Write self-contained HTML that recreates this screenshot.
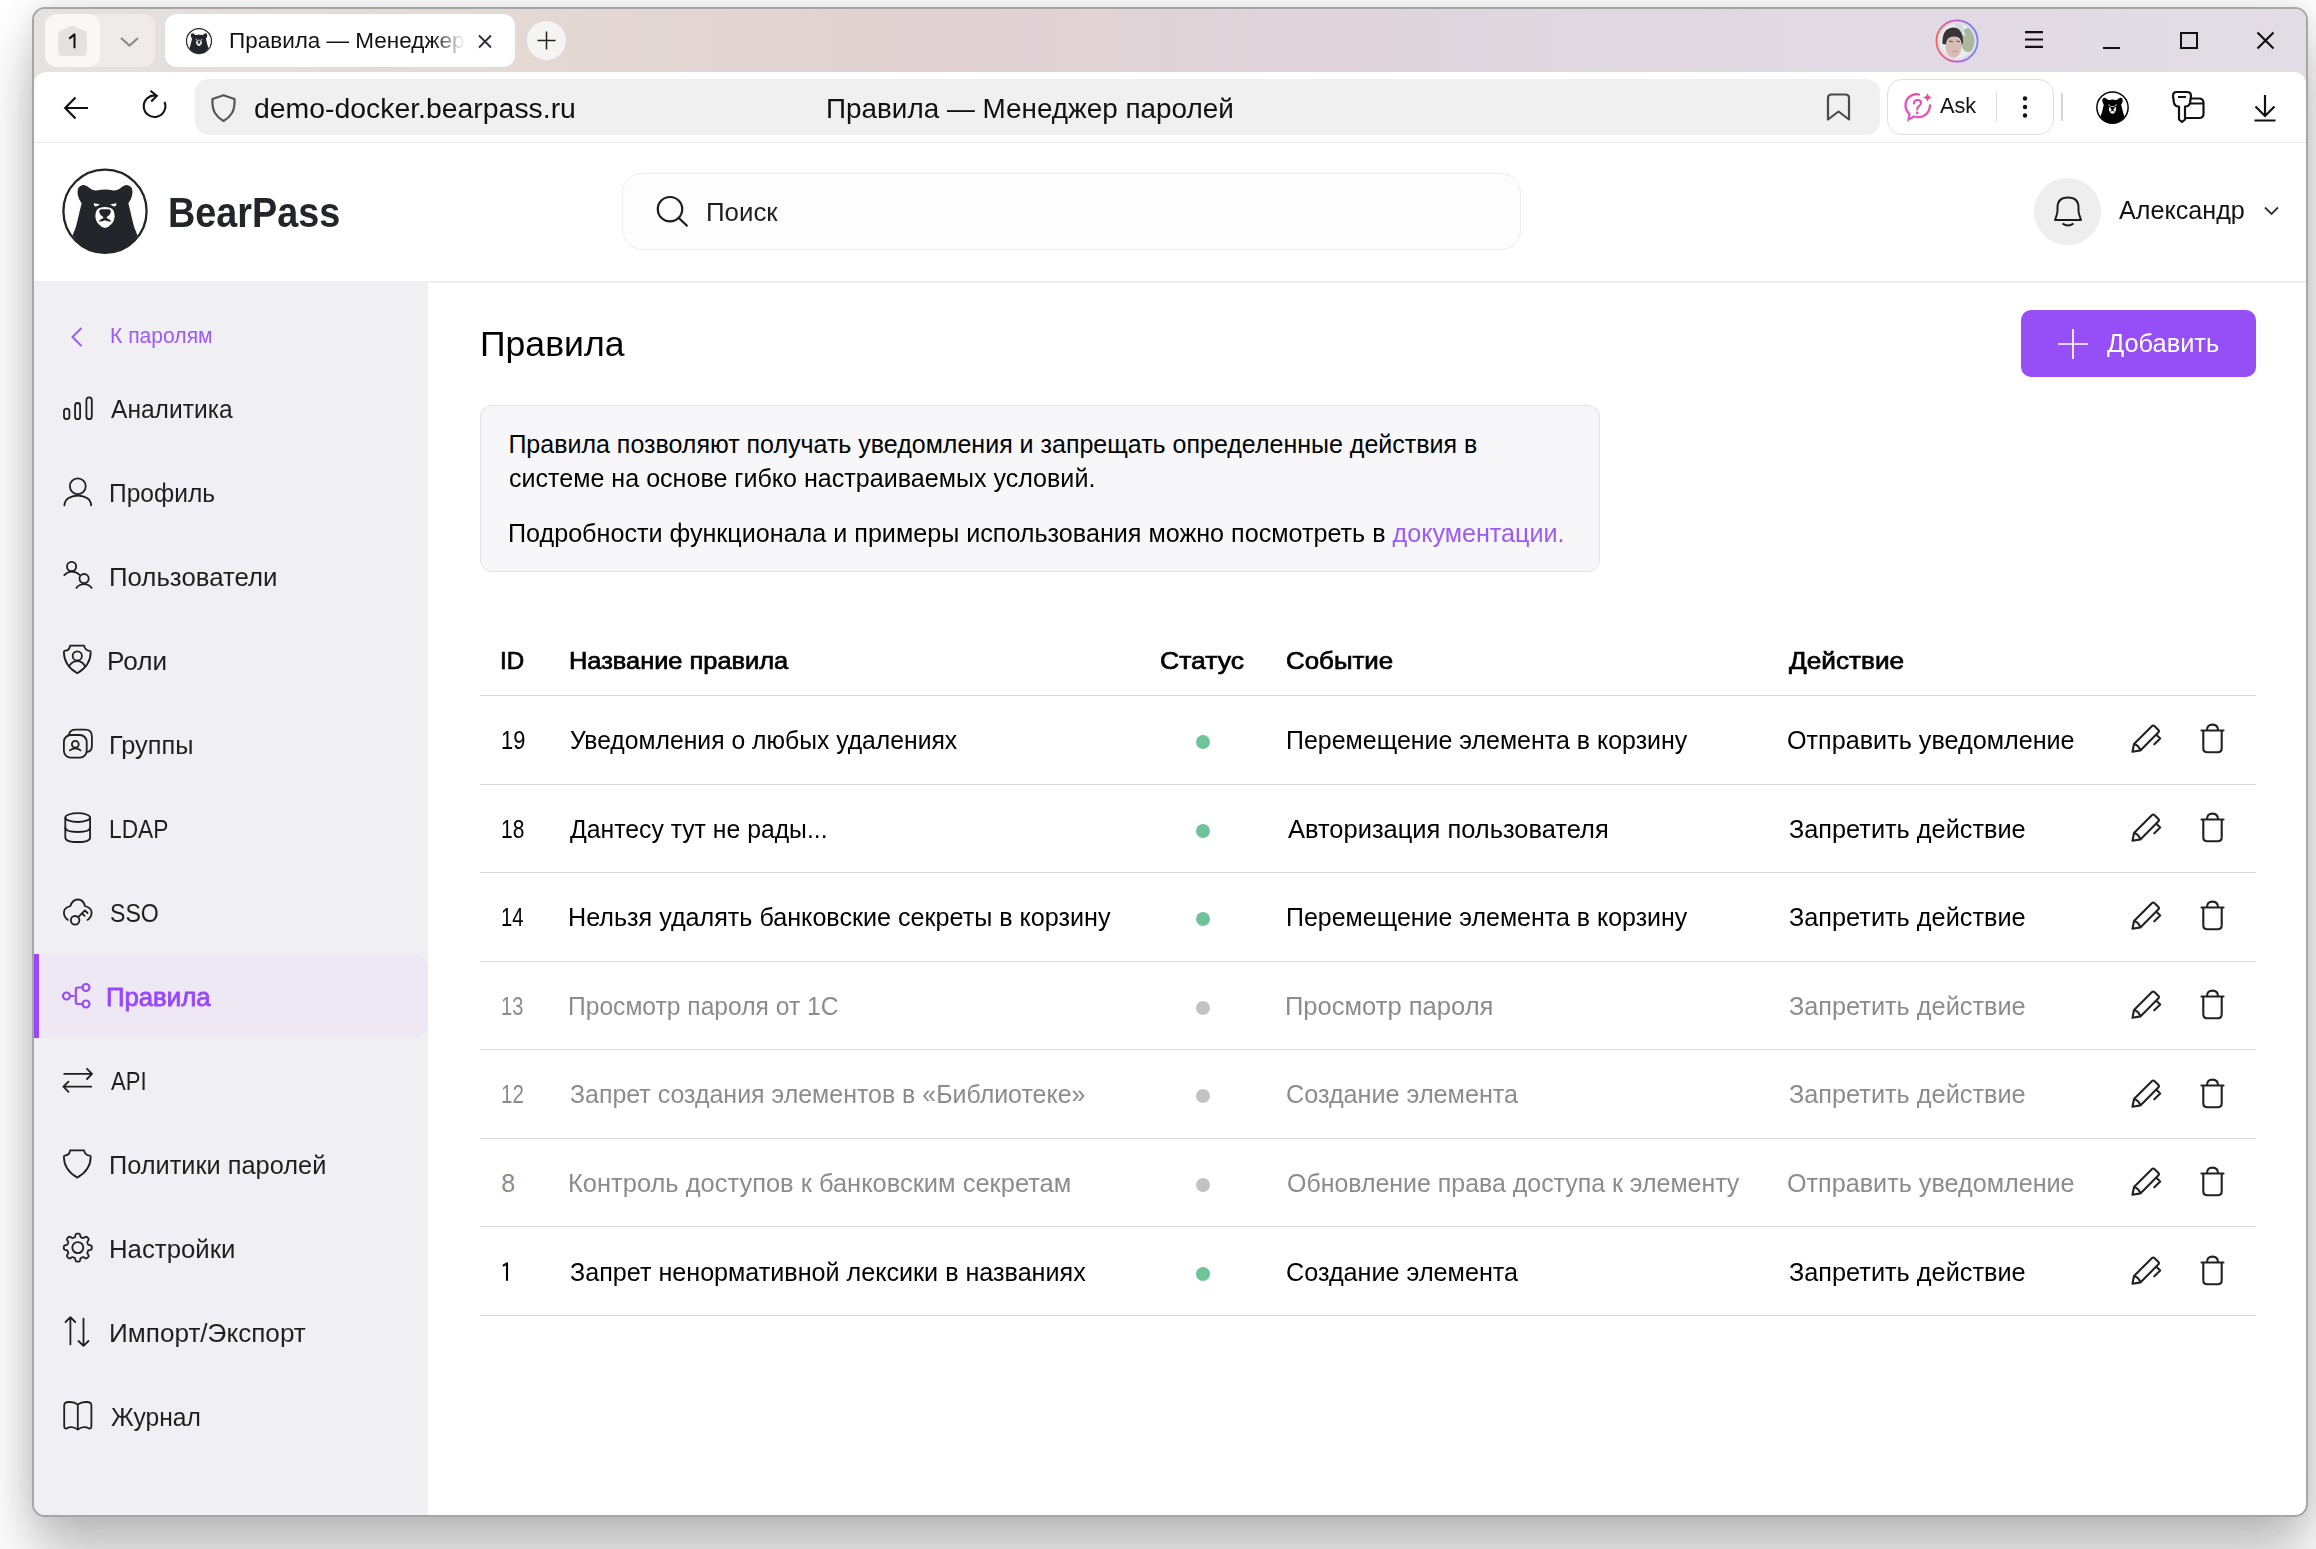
<!DOCTYPE html><html><head><meta charset="utf-8"><style>
*{margin:0;padding:0;box-sizing:border-box}
html,body{width:2316px;height:1549px;overflow:hidden;background:#ffffff;font-family:"Liberation Sans",sans-serif}
.t{position:absolute;white-space:nowrap;line-height:1}
.a{position:absolute}
svg{position:absolute;overflow:visible}
#win{position:absolute;left:32px;top:7px;width:2276px;height:1510px;border:2px solid #a6a6a6;border-radius:13px;overflow:hidden;
 box-shadow:0 44px 58px rgba(0,0,0,0.23), 0 0 40px rgba(0,0,0,0.10), 0 0 20px rgba(0,0,0,0.04);background:#fff}
#clip{position:absolute;left:34px;top:9px;width:2272px;height:1506px;overflow:hidden;border-radius:11px}
#L{position:absolute;left:-34px;top:-9px;width:2316px;height:1549px}
</style></head><body>
<div id="win"></div>
<div id="clip"><div id="L">
<div class="a" style="left:34px;top:9px;width:2272px;height:90px;border-radius:11px 11px 0 0;background:linear-gradient(90deg,#e5e2df 0%,#e3d7d3 25%,#e2d2d3 40%,#dfd5dd 60%,#e1dae4 82%,#e2dce4 100%)"></div>
<div class="a" style="left:45px;top:14px;width:110px;height:53px;border-radius:12px;background:#eeebe8"></div>
<div class="a" style="left:45px;top:14px;width:55px;height:53px;border-radius:12px;background:#f9f8f7"></div>
<svg style="left:58px;top:25px" width="29" height="31" viewBox="0 0 29 31"><path d="M14.5 0.5 L26 5.5 Q29 7 29 10 L29 26 Q29 31 24 31 L5 31 Q0 31 0 26 L0 10 Q0 7 3 5.5 Z" fill="#e4e1de"/></svg>
<svg style="left:68px;top:33px" width="9" height="16" viewBox="0 0 9 16"><path d="M1.2 5.6 L6.5 1.4 V15.2" fill="none" stroke="#111" stroke-width="2" stroke-linejoin="round"/></svg>
<svg style="left:120px;top:36.5px" width="19" height="10" viewBox="0 0 19 10"><path d="M1 1 L9.5 8.5 L18 1" fill="none" stroke="#8a8a8a" stroke-width="2.2"/></svg>
<div class="a" style="left:165px;top:14px;width:350px;height:53px;border-radius:12px;background:#fff"></div>
<svg style="left:185px;top:26.5px" width="28" height="28" viewBox="0 0 94 94"><defs><clipPath id="lc2"><circle cx="47" cy="47.2" r="42"/></clipPath></defs><circle cx="47" cy="47.2" r="42" fill="#fff" stroke="#23252b" stroke-width="4"/><g clip-path="url(#lc2)"><path d="M14.6 71.3 Q18.5 63 20 54.6 Q22 45 23.7 39.4 Q20.5 35 19.8 31 Q19 26.5 20.5 23.5 Q23 20.5 26 21 Q29 21.8 32.5 24.8 Q35 26.8 38.5 26.6 Q43 25.6 47 25.5 Q51 25.6 55.5 26.6 Q59 26.8 61.5 24.8 Q65 21.8 68 21 Q71 20.5 73.5 23.5 Q75 26.5 74.2 31 Q73.5 35 70.3 39.4 Q72 45 74 54.6 Q75.5 63 79.4 71.3 Q72 83 60 87.5 Q53.5 90 47 90 Q40.5 90 34 87.5 Q22 83 14.6 71.3Z" fill="#23252b"/></g><path d="M35.8 39.2 Q39 39.6 42 40.6 Q39.8 42.2 37.8 42.6 Q35.8 42.4 35.8 39.2Z" fill="#fff"/><path d="M58.4 39.2 Q55.2 39.6 52.2 40.6 Q54.4 42.2 56.4 42.6 Q58.4 42.4 58.4 39.2Z" fill="#fff"/><path d="M47 43 Q52.5 43 54.8 45.5 Q56.8 48 56.7 52 Q56.5 57 53 60.5 Q50 63.8 47 64 Q44 63.8 41 60.5 Q37.5 57 37.3 52 Q37.2 48 39.2 45.5 Q41.5 43 47 43Z" fill="#fff"/><path d="M43.5 45.2 H50.5 Q53 45.2 52.8 48 Q52.3 50.8 49 52.8 Q48.2 53.5 49 54.2 Q52.5 55.5 53.5 57.5 Q50 57.8 47 56.3 Q44 57.8 40.5 57.5 Q41.5 55.5 45 54.2 Q45.8 53.5 45 52.8 Q41.7 50.8 41.2 48 Q41 45.2 43.5 45.2Z" fill="#23252b"/></svg>
<div class="t" style="left:229.00px;top:30.25px;font-size:22.5px;color:#111;font-weight:400;width:236px;overflow:hidden;height:30px;-webkit-mask-image:linear-gradient(90deg,#000 86%,transparent 100%)">Правила — Менеджер паролей</div>
<svg style="left:478px;top:35px" width="14" height="13" viewBox="0 0 14 13"><path d="M1 0.5 L13 12.5 M13 0.5 L1 12.5" stroke="#2b3040" stroke-width="1.9"/></svg>
<div class="a" style="left:526.5px;top:21px;width:39px;height:39px;border-radius:50%;background:#f6f4f2"></div>
<svg style="left:537px;top:31px" width="19" height="19" viewBox="0 0 19 19"><path d="M9.5 0.5 V18.5 M0.5 9.5 H18.5" stroke="#222" stroke-width="1.5"/></svg>
<svg style="left:1932px;top:16px" width="50" height="50" viewBox="0 0 50 50"><defs><linearGradient id="avg" x1="0" y1="0" x2="1" y2="0"><stop offset="0" stop-color="#f25e5a"/><stop offset="0.5" stop-color="#c056d8"/><stop offset="1" stop-color="#5e88f2"/></linearGradient><clipPath id="avc"><circle cx="25" cy="25" r="17.4"/></clipPath></defs><circle cx="25" cy="25" r="20.6" fill="none" stroke="url(#avg)" stroke-width="1.7"/><g clip-path="url(#avc)"><rect width="50" height="50" fill="#e7edf0"/><ellipse cx="36" cy="24" rx="7.5" ry="12" fill="#9fae8e" opacity="0.85"/><path d="M22 6 L30 8 L34 20 L26 18Z" fill="#cfdce0"/><ellipse cx="21.5" cy="31" rx="8" ry="11" fill="#d8bcb6"/><path d="M10.5 28 Q9.5 12.5 21 11.5 Q31.5 11.5 31 28 L29.5 27 Q28.5 20 22 20.5 Q14.5 20.5 13.8 28.5 Z" fill="#3b3335"/><path d="M17 25.5 Q19 24.5 21 26 M24.5 25.5 Q26 24.5 28 25.8" stroke="#5a4446" stroke-width="1" fill="none"/><path d="M20 35.5 Q23 34.8 26 35.5" stroke="#c59c98" stroke-width="1.2" fill="none"/><path d="M10 50 Q14 41 21 42 Q28 41.5 33 46 V50Z" fill="#f3f3f3"/></g></svg>
<svg style="left:2025px;top:31px" width="18" height="17" viewBox="0 0 18 17"><path d="M0 1.2 H18 M0 8.5 H18 M0 15.8 H18" stroke="#111" stroke-width="2.2"/></svg>
<div class="a" style="left:2103px;top:47px;width:17px;height:2.2px;background:#111"></div>
<div class="a" style="left:2180px;top:32px;width:17.5px;height:17px;border:2.2px solid #111"></div>
<svg style="left:2257px;top:32px" width="17" height="17" viewBox="0 0 17 17"><path d="M0.5 0.5 L16.5 16.5 M16.5 0.5 L0.5 16.5" stroke="#111" stroke-width="2.2"/></svg>
<div class="a" style="left:34px;top:72px;width:2272px;height:71px;background:#fff;border-radius:12px 12px 0 0;border-bottom:1.5px solid #e8e8e8"></div>
<svg style="left:64px;top:96px" width="25" height="24" viewBox="0 0 25 24"><path d="M24 12 H1.5 M11.5 1.5 L1.2 12 L11.5 22.5" fill="none" stroke="#111" stroke-width="2.2"/></svg>
<svg style="left:141px;top:90px" width="26" height="32" viewBox="0 0 26 32"><path d="M15 5.5 A10.8 10.8 0 1 0 23.5 12" fill="none" stroke="#111" stroke-width="2.1"/><path d="M9.5 0.8 L15.8 5.8 L10.2 11.5" fill="none" stroke="#111" stroke-width="2.1"/></svg>
<div class="a" style="left:195px;top:79px;width:1685px;height:56px;border-radius:14px;background:#f0f0f0"></div>
<svg style="left:211px;top:94px" width="25" height="28" viewBox="0 0 25 28"><path d="M12.5 1.2 L23.5 5 Q24 14 21 19 Q18 24 12.5 27 Q7 24 4 19 Q1 14 1.5 5 Z" fill="none" stroke="#555" stroke-width="2.2" stroke-linejoin="round"/></svg>
<div class="t" style="left:253.99px;top:94.33px;font-size:28.2px;color:#111;font-weight:400;transform:scaleX(1.0071);transform-origin:0 0;">demo-docker.bearpass.ru</div>
<div class="t" style="left:826.31px;top:95.10px;font-size:28px;color:#111;font-weight:400;transform:scaleX(0.9952);transform-origin:0 0;">Правила — Менеджер паролей</div>
<svg style="left:1826px;top:93px" width="25" height="28" viewBox="0 0 25 28"><path d="M2 26.5 V5 Q2 1.5 5.5 1.5 H19.5 Q23 1.5 23 5 V26.5 L12.5 18.5 Z" fill="none" stroke="#4a4a4a" stroke-width="2.2" stroke-linejoin="round"/></svg>
<div class="a" style="left:1887px;top:79px;width:167px;height:56px;border-radius:15px;border:1.3px solid #dedede;background:#fff"></div>
<svg style="left:1904px;top:92px" width="30" height="30" viewBox="0 0 30 30"><defs><linearGradient id="askg" x1="0" y1="1" x2="1" y2="0"><stop offset="0" stop-color="#e25ad6"/><stop offset="1" stop-color="#f0488a"/></linearGradient></defs><path d="M15 2.5 Q10.5 1.5 6.5 4 Q1 7.5 1.5 14.5 Q2 19 5.5 22 L4.5 27.5 L10 24.5 Q15 26 19.5 24 Q25.5 21 26 13.5" fill="none" stroke="url(#askg)" stroke-width="2.3" stroke-linecap="round"/><path d="M10 11.5 Q10 8 13.5 8 Q17 8 17 11 Q17 13 14.5 14.5 Q13.2 15.5 13.2 17.5" fill="none" stroke="#e04fc0" stroke-width="2.1" stroke-linecap="round"/><circle cx="13.2" cy="21" r="1.4" fill="#e04fc0"/><path d="M23.5 1 Q24.2 4.8 28.5 5.5 Q24.2 6.2 23.5 10 Q22.8 6.2 18.5 5.5 Q22.8 4.8 23.5 1Z" fill="#ee4f8f"/></svg>
<div class="t" style="left:1940.00px;top:95.32px;font-size:22.3px;color:#111;font-weight:400;transform:scaleX(0.9732);transform-origin:0 0;">Ask</div>
<div class="a" style="left:1996px;top:92px;width:1.3px;height:30px;background:#dcdcdc"></div>
<svg style="left:2021px;top:96px" width="8" height="22" viewBox="0 0 8 22"><circle cx="4" cy="2.5" r="2.2" fill="#111"/><circle cx="4" cy="11" r="2.2" fill="#111"/><circle cx="4" cy="19.5" r="2.2" fill="#111"/></svg>
<div class="a" style="left:2061px;top:93px;width:1.5px;height:28px;background:#d6d6d6"></div>
<svg style="left:2095px;top:90px" width="35" height="35" viewBox="0 0 94 94"><defs><clipPath id="lc3"><circle cx="47" cy="47.2" r="42"/></clipPath></defs><circle cx="47" cy="47.2" r="42" fill="#fff" stroke="#000" stroke-width="4"/><g clip-path="url(#lc3)"><path d="M14.6 71.3 Q18.5 63 20 54.6 Q22 45 23.7 39.4 Q20.5 35 19.8 31 Q19 26.5 20.5 23.5 Q23 20.5 26 21 Q29 21.8 32.5 24.8 Q35 26.8 38.5 26.6 Q43 25.6 47 25.5 Q51 25.6 55.5 26.6 Q59 26.8 61.5 24.8 Q65 21.8 68 21 Q71 20.5 73.5 23.5 Q75 26.5 74.2 31 Q73.5 35 70.3 39.4 Q72 45 74 54.6 Q75.5 63 79.4 71.3 Q72 83 60 87.5 Q53.5 90 47 90 Q40.5 90 34 87.5 Q22 83 14.6 71.3Z" fill="#000"/></g><path d="M35.8 39.2 Q39 39.6 42 40.6 Q39.8 42.2 37.8 42.6 Q35.8 42.4 35.8 39.2Z" fill="#fff"/><path d="M58.4 39.2 Q55.2 39.6 52.2 40.6 Q54.4 42.2 56.4 42.6 Q58.4 42.4 58.4 39.2Z" fill="#fff"/><path d="M47 43 Q52.5 43 54.8 45.5 Q56.8 48 56.7 52 Q56.5 57 53 60.5 Q50 63.8 47 64 Q44 63.8 41 60.5 Q37.5 57 37.3 52 Q37.2 48 39.2 45.5 Q41.5 43 47 43Z" fill="#fff"/><path d="M43.5 45.2 H50.5 Q53 45.2 52.8 48 Q52.3 50.8 49 52.8 Q48.2 53.5 49 54.2 Q52.5 55.5 53.5 57.5 Q50 57.8 47 56.3 Q44 57.8 40.5 57.5 Q41.5 55.5 45 54.2 Q45.8 53.5 45 52.8 Q41.7 50.8 41.2 48 Q41 45.2 43.5 45.2Z" fill="#000"/></svg>
<svg style="left:2172px;top:90px" width="33" height="34" viewBox="0 0 33 34"><path d="M4.5 2 H15 Q19 2 19 6 L18 13 Q17 16.5 13.5 16.5 L13 16.5 L13 29.5 L10 32 L7 29.5 L7 16.5 L6.5 16.5 Q3 16.5 2 13 L1 6 Q1 2 4.5 2Z" fill="none" stroke="#111" stroke-width="2.2" stroke-linejoin="round"/><path d="M6 7 H14" stroke="#111" stroke-width="2"/><path d="M18.5 8.5 H27 Q31.5 8.5 31.5 13 V24 Q31.5 28 27 28 H13.5" fill="none" stroke="#111" stroke-width="2.2"/><path d="M18 13.5 H31.5" stroke="#111" stroke-width="2.2"/></svg>
<svg style="left:2254px;top:94px" width="22" height="28" viewBox="0 0 22 28"><path d="M11 1 V22 M1.5 12.5 L11 22 L20.5 12.5 M0.5 26.5 H21.5" fill="none" stroke="#111" stroke-width="2.2"/></svg>
<div class="a" style="left:34px;top:143px;width:2272px;height:138px;background:#fff"></div>
<div class="a" style="left:34px;top:281px;width:2272px;height:2px;background:#efefef"></div>
<svg style="left:58px;top:164px" width="94" height="94" viewBox="0 0 94 94"><defs><clipPath id="lc"><circle cx="47" cy="47.2" r="42"/></clipPath></defs><circle cx="47" cy="47.2" r="41.6" fill="#fff" stroke="#23252b" stroke-width="2.3"/><g clip-path="url(#lc)"><path d="M14.6 71.3 Q18.5 63 20 54.6 Q22 45 23.7 39.4 Q20.5 35 19.8 31 Q19 26.5 20.5 23.5 Q23 20.5 26 21 Q29 21.8 32.5 24.8 Q35 26.8 38.5 26.6 Q43 25.6 47 25.5 Q51 25.6 55.5 26.6 Q59 26.8 61.5 24.8 Q65 21.8 68 21 Q71 20.5 73.5 23.5 Q75 26.5 74.2 31 Q73.5 35 70.3 39.4 Q72 45 74 54.6 Q75.5 63 79.4 71.3 Q72 83 60 87.5 Q53.5 90 47 90 Q40.5 90 34 87.5 Q22 83 14.6 71.3Z" fill="#23252b"/></g><path d="M35.8 39.2 Q39 39.6 42 40.6 Q39.8 42.2 37.8 42.6 Q35.8 42.4 35.8 39.2Z" fill="#fff"/><path d="M58.4 39.2 Q55.2 39.6 52.2 40.6 Q54.4 42.2 56.4 42.6 Q58.4 42.4 58.4 39.2Z" fill="#fff"/><path d="M47 43 Q52.5 43 54.8 45.5 Q56.8 48 56.7 52 Q56.5 57 53 60.5 Q50 63.8 47 64 Q44 63.8 41 60.5 Q37.5 57 37.3 52 Q37.2 48 39.2 45.5 Q41.5 43 47 43Z" fill="#fff"/><path d="M43.5 45.2 H50.5 Q53 45.2 52.8 48 Q52.3 50.8 49 52.8 Q48.2 53.5 49 54.2 Q52.5 55.5 53.5 57.5 Q50 57.8 47 56.3 Q44 57.8 40.5 57.5 Q41.5 55.5 45 54.2 Q45.8 53.5 45 52.8 Q41.7 50.8 41.2 48 Q41 45.2 43.5 45.2Z" fill="#23252b"/></svg>
<div class="t" style="left:168.24px;top:191.40px;font-size:43px;color:#23252b;font-weight:700;transform:scaleX(0.8782);transform-origin:0 0;">BearPass</div>
<div class="a" style="left:622px;top:173px;width:899px;height:77px;border-radius:20px;border:1.6px solid #ececec;background:#fdfdfd"></div>
<svg style="left:655px;top:194px" width="36" height="36" viewBox="0 0 36 36"><circle cx="15" cy="15.2" r="12.2" fill="none" stroke="#1c1c1c" stroke-width="2.2"/><path d="M23.8 24 L32.5 32.3" stroke="#1c1c1c" stroke-width="2.2"/></svg>
<div class="t" style="left:706.27px;top:199.51px;font-size:25.5px;color:#1f1f1f;font-weight:400;transform:scaleX(1.0143);transform-origin:0 0;">Поиск</div>
<div class="a" style="left:2034px;top:177.5px;width:67px;height:67px;border-radius:50%;background:#eeeeee"></div>
<svg style="left:2053px;top:196px" width="30" height="32" viewBox="0 0 30 32"><path d="M2 24 H28 L26.5 19.5 Q25.5 17 25.5 14 V11.5 Q25.5 1.5 15 1.5 Q4.5 1.5 4.5 11.5 V14 Q4.5 17 3.5 19.5 Z" fill="none" stroke="#1c1c1c" stroke-width="2" stroke-linejoin="round"/><path d="M9.5 27.5 Q15 31.5 20.5 27.5" fill="none" stroke="#1c1c1c" stroke-width="2"/></svg>
<div class="t" style="left:2119.40px;top:198.24px;font-size:25px;color:#111;font-weight:400;transform:scaleX(1.0058);transform-origin:0 0;">Александр</div>
<svg style="left:2264px;top:206px" width="15" height="10" viewBox="0 0 15 10"><path d="M1 1.5 L7.5 8 L14 1.5" fill="none" stroke="#333" stroke-width="1.8"/></svg>
<div class="a" style="left:34px;top:283px;width:394px;height:1232px;background:#f0eff4"></div>
<svg style="left:70px;top:327px" width="14" height="20" viewBox="0 0 14 20"><path d="M11.5 1 L2.5 10 L11.5 19" fill="none" stroke="#9b5cf6" stroke-width="2"/></svg>
<div class="t" style="left:110.31px;top:325.87px;font-size:21.3px;color:#9b5cf6;font-weight:400;transform:scaleX(0.9914);transform-origin:0 0;">К паролям</div>
<svg style="left:0;top:0" width="2316" height="1549" viewBox="0 0 2316 1549"><rect x="64" y="408.6" width="5.4" height="10.6" rx="2.7" fill="none" stroke="#1f1f1f" stroke-width="1.8" stroke-linecap="round" stroke-linejoin="round"/><rect x="75.1" y="403" width="5" height="16.2" rx="2.5" fill="none" stroke="#1f1f1f" stroke-width="1.8" stroke-linecap="round" stroke-linejoin="round"/><rect x="86.4" y="397.4" width="5.4" height="21.8" rx="2.7" fill="none" stroke="#1f1f1f" stroke-width="1.8" stroke-linecap="round" stroke-linejoin="round"/><circle cx="77.8" cy="486.3" r="7.9" fill="none" stroke="#1f1f1f" stroke-width="1.8" stroke-linecap="round" stroke-linejoin="round"/><path d="M64.4 505.4 C64.6 499.6 70 495.6 77.8 495.6 C85.6 495.6 91 499.6 91.2 505.4" fill="none" stroke="#1f1f1f" stroke-width="1.8" stroke-linecap="round" stroke-linejoin="round"/><circle cx="71.6" cy="566.5" r="4.6" fill="none" stroke="#1f1f1f" stroke-width="1.8" stroke-linecap="round" stroke-linejoin="round"/><path d="M64.3 575.2 C66.5 572.8 69 571.6 71.6 571.6 C74.6 571.6 77.2 572.6 79.6 574.8" fill="none" stroke="#1f1f1f" stroke-width="1.8" stroke-linecap="round" stroke-linejoin="round"/><circle cx="84.1" cy="578.6" r="4.6" fill="none" stroke="#1f1f1f" stroke-width="1.8" stroke-linecap="round" stroke-linejoin="round"/><path d="M76.4 587.8 C78.6 585.4 81 584.2 84.1 584.2 C87.2 584.2 89.6 585.4 91.6 587.8" fill="none" stroke="#1f1f1f" stroke-width="1.8" stroke-linecap="round" stroke-linejoin="round"/><path d="M70.1 645.6 H84.1 Q85 650.6 90 650.9 Q90.8 651 90.7 652.5 Q90.5 665.5 77.3 673.3 Q64.1 665.5 63.9 652.5 Q63.8 651 64.6 650.9 Q69.6 650.6 70.1 645.6Z" fill="none" stroke="#1f1f1f" stroke-width="1.8" stroke-linecap="round" stroke-linejoin="round"/><circle cx="77.3" cy="655.9" r="4.6" fill="none" stroke="#1f1f1f" stroke-width="1.8" stroke-linecap="round" stroke-linejoin="round"/><path d="M68.9 666.4 C70.8 663 73.8 661.1 77.3 661.1 C80.8 661.1 83.5 663 85.1 666.4" fill="none" stroke="#1f1f1f" stroke-width="1.8" stroke-linecap="round" stroke-linejoin="round"/><path d="M68.9 734.9 Q70 729.7 75.5 729.7 H85.1 Q91.9 729.7 91.9 736.5 V745.5 Q91.9 751.5 86.9 752" fill="none" stroke="#1f1f1f" stroke-width="1.8" stroke-linecap="round" stroke-linejoin="round"/><rect x="63.9" y="735" width="22.8" height="22.6" rx="6.8" fill="none" stroke="#1f1f1f" stroke-width="1.8" stroke-linecap="round" stroke-linejoin="round"/><circle cx="75.3" cy="744.2" r="3.4" fill="none" stroke="#1f1f1f" stroke-width="1.8" stroke-linecap="round" stroke-linejoin="round"/><path d="M69.9 750.4 C71.5 749 73.3 748.3 75.3 748.3 C77.3 748.3 79 749 80.5 750.4" fill="none" stroke="#1f1f1f" stroke-width="1.8" stroke-linecap="round" stroke-linejoin="round"/><ellipse cx="77.7" cy="817.6" rx="12.4" ry="4.4" fill="none" stroke="#1f1f1f" stroke-width="1.8" stroke-linecap="round" stroke-linejoin="round"/><path d="M65.3 817.6 V837.4 Q65.3 842 77.7 842 Q90.1 842 90.1 837.4 V817.6" fill="none" stroke="#1f1f1f" stroke-width="1.8" stroke-linecap="round" stroke-linejoin="round"/><path d="M65.3 827.6 Q65.3 832 77.7 832 Q90.1 832 90.1 827.6" fill="none" stroke="#1f1f1f" stroke-width="1.8" stroke-linecap="round" stroke-linejoin="round"/><path d="M67.9 919.9 Q63.9 917.3 63.9 912.6 Q63.9 907.8 70.4 906 Q72.5 899.5 77.9 899.5 Q83.3 899.5 84.9 906 Q91.6 907.8 91.6 912.6 Q91.6 917.3 87.5 919.9" fill="none" stroke="#1f1f1f" stroke-width="1.8" stroke-linecap="round" stroke-linejoin="round"/><circle cx="75.1" cy="920.3" r="4.3" fill="none" stroke="#1f1f1f" stroke-width="1.8" stroke-linecap="round" stroke-linejoin="round"/><path d="M78.2 917.1 L84.9 910.4 L87.5 913 M82 913.3 L84.6 915.9" fill="none" stroke="#1f1f1f" stroke-width="1.8" stroke-linecap="round" stroke-linejoin="round"/><path d="M64.2 1073.9 H91.8 M87 1068.8 L92 1073.9 L87 1079 M91.2 1086.7 H63.6 M68.5 1081.6 L63.4 1086.7 L68.5 1091.8" fill="none" stroke="#1f1f1f" stroke-width="1.8" stroke-linecap="round" stroke-linejoin="round"/><path d="M70.1 1150.3 H84.1 Q85 1155.3 90 1155.6 Q90.8 1155.7 90.7 1157.2 Q90.5 1170 77.3 1177.6 Q64.1 1170 63.9 1157.2 Q63.8 1155.7 64.6 1155.6 Q69.6 1155.3 70.1 1150.3Z" fill="none" stroke="#1f1f1f" stroke-width="1.8" stroke-linecap="round" stroke-linejoin="round"/><path d="M91.80 1247.60 L91.79 1248.06 L91.74 1248.51 L91.63 1248.96 L91.39 1249.39 L90.84 1249.75 L89.91 1250.01 L88.98 1250.21 L88.42 1250.45 L88.14 1250.74 L87.96 1251.05 L87.82 1251.37 L87.69 1251.69 L87.55 1252.02 L87.43 1252.35 L87.33 1252.69 L87.32 1253.10 L87.55 1253.66 L88.07 1254.46 L88.55 1255.30 L88.67 1255.94 L88.54 1256.42 L88.30 1256.81 L88.01 1257.17 L87.70 1257.50 L87.37 1257.81 L87.01 1258.10 L86.62 1258.34 L86.14 1258.47 L85.50 1258.35 L84.66 1257.87 L83.86 1257.35 L83.30 1257.12 L82.89 1257.13 L82.55 1257.23 L82.22 1257.35 L81.89 1257.49 L81.57 1257.62 L81.25 1257.76 L80.94 1257.94 L80.65 1258.22 L80.41 1258.78 L80.21 1259.71 L79.95 1260.64 L79.59 1261.19 L79.16 1261.43 L78.71 1261.54 L78.26 1261.59 L77.80 1261.60 L77.34 1261.59 L76.89 1261.54 L76.44 1261.43 L76.01 1261.19 L75.65 1260.64 L75.39 1259.71 L75.19 1258.78 L74.95 1258.22 L74.66 1257.94 L74.35 1257.76 L74.03 1257.62 L73.71 1257.49 L73.38 1257.35 L73.05 1257.23 L72.71 1257.13 L72.30 1257.12 L71.74 1257.35 L70.94 1257.87 L70.10 1258.35 L69.46 1258.47 L68.98 1258.34 L68.59 1258.10 L68.23 1257.81 L67.90 1257.50 L67.59 1257.17 L67.30 1256.81 L67.06 1256.42 L66.93 1255.94 L67.05 1255.30 L67.53 1254.46 L68.05 1253.66 L68.28 1253.10 L68.27 1252.69 L68.17 1252.35 L68.05 1252.02 L67.91 1251.69 L67.78 1251.37 L67.64 1251.05 L67.46 1250.74 L67.18 1250.45 L66.62 1250.21 L65.69 1250.01 L64.76 1249.75 L64.21 1249.39 L63.97 1248.96 L63.86 1248.51 L63.81 1248.06 L63.80 1247.60 L63.81 1247.14 L63.86 1246.69 L63.97 1246.24 L64.21 1245.81 L64.76 1245.45 L65.69 1245.19 L66.62 1244.99 L67.18 1244.75 L67.46 1244.46 L67.64 1244.15 L67.78 1243.83 L67.91 1243.51 L68.05 1243.18 L68.17 1242.85 L68.27 1242.51 L68.28 1242.10 L68.05 1241.54 L67.53 1240.74 L67.05 1239.90 L66.93 1239.26 L67.06 1238.78 L67.30 1238.39 L67.59 1238.03 L67.90 1237.70 L68.23 1237.39 L68.59 1237.10 L68.98 1236.86 L69.46 1236.73 L70.10 1236.85 L70.94 1237.33 L71.74 1237.85 L72.30 1238.08 L72.71 1238.07 L73.05 1237.97 L73.38 1237.85 L73.71 1237.71 L74.03 1237.58 L74.35 1237.44 L74.66 1237.26 L74.95 1236.98 L75.19 1236.42 L75.39 1235.49 L75.65 1234.56 L76.01 1234.01 L76.44 1233.77 L76.89 1233.66 L77.34 1233.61 L77.80 1233.60 L78.26 1233.61 L78.71 1233.66 L79.16 1233.77 L79.59 1234.01 L79.95 1234.56 L80.21 1235.49 L80.41 1236.42 L80.65 1236.98 L80.94 1237.26 L81.25 1237.44 L81.57 1237.58 L81.89 1237.71 L82.22 1237.85 L82.55 1237.97 L82.89 1238.07 L83.30 1238.08 L83.86 1237.85 L84.66 1237.33 L85.50 1236.85 L86.14 1236.73 L86.62 1236.86 L87.01 1237.10 L87.37 1237.39 L87.70 1237.70 L88.01 1238.03 L88.30 1238.39 L88.54 1238.78 L88.67 1239.26 L88.55 1239.90 L88.07 1240.74 L87.55 1241.54 L87.32 1242.10 L87.33 1242.51 L87.43 1242.85 L87.55 1243.18 L87.69 1243.51 L87.82 1243.83 L87.96 1244.15 L88.14 1244.46 L88.42 1244.75 L88.98 1244.99 L89.91 1245.19 L90.84 1245.45 L91.39 1245.81 L91.63 1246.24 L91.74 1246.69 L91.79 1247.14Z" fill="none" stroke="#1f1f1f" stroke-width="1.8" stroke-linecap="round" stroke-linejoin="round"/><circle cx="77.8" cy="1247.6" r="5.5" fill="none" stroke="#1f1f1f" stroke-width="1.8" stroke-linecap="round" stroke-linejoin="round"/><path d="M70.4 1344.4 V1317.6 M65.6 1322 L70.4 1317.2 L75.2 1322 M83.5 1318.6 V1345.2 M78.5 1341 L83.5 1345.8 L88.5 1341" fill="none" stroke="#1f1f1f" stroke-width="1.8" stroke-linecap="round" stroke-linejoin="round"/><path d="M77.8 1404.5 Q74.5 1402 70 1402 H69 Q66.5 1402 64.8 1403.3 Q64.2 1404 64.2 1405.5 V1426 Q64.2 1429 66.8 1428.4 Q68.8 1427.2 71 1427.2 H71.5 Q74.8 1427.2 77.8 1429.6 Q80.8 1427.2 84.1 1427.2 H84.6 Q86.8 1427.2 88.8 1428.4 Q91.4 1429 91.4 1426 V1405.5 Q91.4 1404 90.8 1403.3 Q89.1 1402 86.6 1402 H85.6 Q81.1 1402 77.8 1404.5Z M77.8 1404.5 V1429.6" fill="none" stroke="#1f1f1f" stroke-width="1.8" stroke-linecap="round" stroke-linejoin="round"/></svg>
<div class="t" style="left:111.30px;top:396.84px;font-size:25px;color:#1f1f1f;font-weight:400;transform:scaleX(0.9827);transform-origin:0 0;">Аналитика</div>
<div class="t" style="left:109.33px;top:480.84px;font-size:25px;color:#1f1f1f;font-weight:400;transform:scaleX(0.9829);transform-origin:0 0;">Профиль</div>
<div class="t" style="left:109.24px;top:564.84px;font-size:25px;color:#1f1f1f;font-weight:400;transform:scaleX(1.0324);transform-origin:0 0;">Пользователи</div>
<div class="t" style="left:106.51px;top:648.84px;font-size:25px;color:#1f1f1f;font-weight:400;transform:scaleX(1.0455);transform-origin:0 0;">Роли</div>
<div class="t" style="left:109.27px;top:732.84px;font-size:25px;color:#1f1f1f;font-weight:400;transform:scaleX(1.0133);transform-origin:0 0;">Группы</div>
<div class="t" style="left:109.48px;top:816.84px;font-size:25px;color:#1f1f1f;font-weight:400;transform:scaleX(0.9101);transform-origin:0 0;">LDAP</div>
<div class="t" style="left:110.37px;top:900.84px;font-size:25px;color:#1f1f1f;font-weight:400;transform:scaleX(0.9250);transform-origin:0 0;">SSO</div>
<div class="t" style="left:111.30px;top:1068.84px;font-size:25px;color:#1f1f1f;font-weight:400;transform:scaleX(0.8840);transform-origin:0 0;">API</div>
<div class="t" style="left:109.27px;top:1152.84px;font-size:25px;color:#1f1f1f;font-weight:400;transform:scaleX(1.0141);transform-origin:0 0;">Политики паролей</div>
<div class="t" style="left:109.24px;top:1236.84px;font-size:25px;color:#1f1f1f;font-weight:400;transform:scaleX(1.0316);transform-origin:0 0;">Настройки</div>
<div class="t" style="left:109.21px;top:1320.84px;font-size:25px;color:#1f1f1f;font-weight:400;transform:scaleX(1.0453);transform-origin:0 0;">Импорт/Экспорт</div>
<div class="t" style="left:111.30px;top:1404.84px;font-size:25px;color:#1f1f1f;font-weight:400;transform:scaleX(0.9840);transform-origin:0 0;">Журнал</div>
<div class="a" style="left:34px;top:954px;width:394px;height:84px;background:#ede8f4;border-radius:0 14px 14px 0"></div>
<div class="a" style="left:34px;top:954px;width:5px;height:84px;background:#9747ff"></div>
<svg style="left:62px;top:983px" width="30" height="26" viewBox="0 0 30 26"><circle cx="4.5" cy="13" r="3.5" fill="none" stroke="#9b4cf6" stroke-width="2.2" stroke-linecap="round" stroke-linejoin="round"/><circle cx="24" cy="4.5" r="3.5" fill="none" stroke="#9b4cf6" stroke-width="2.2" stroke-linecap="round" stroke-linejoin="round"/><circle cx="24" cy="21" r="3.5" fill="none" stroke="#9b4cf6" stroke-width="2.2" stroke-linecap="round" stroke-linejoin="round"/><path d="M8 13 H11.5 M20.5 4.5 H16 Q13.8 4.5 13.8 6.7 V19 Q13.8 21 16 21 H20.5" fill="none" stroke="#9b4cf6" stroke-width="2.2" stroke-linecap="round" stroke-linejoin="round"/></svg>
<div class="t" style="left:105.94px;top:984.84px;font-size:25px;color:#9747ff;font-weight:400;transform:scaleX(1.0290);transform-origin:0 0;-webkit-text-stroke:0.8px #9747ff;">Правила</div>
<div class="t" style="left:480.48px;top:326.40px;font-size:35.2px;color:#000;font-weight:400;transform:scaleX(1.0112);transform-origin:0 0;">Правила</div>
<div class="a" style="left:2021px;top:310px;width:235px;height:67px;border-radius:10px;background:#964ff6"></div>
<svg style="left:2058px;top:329px" width="30" height="30" viewBox="0 0 30 30"><path d="M15 0 V30 M0 15 H30" stroke="#fff" stroke-width="1.7"/></svg>
<div class="t" style="left:2107.00px;top:330.78px;font-size:25.3px;color:#fff;font-weight:400;transform:scaleX(1.0034);transform-origin:0 0;">Добавить</div>
<div class="a" style="left:480px;top:405px;width:1120px;height:167px;border-radius:12px;border:1.5px solid #e3e3e6;background:#f7f7f9"></div>
<div class="t" style="left:508.40px;top:431.84px;font-size:25px;color:#000;font-weight:400;transform:scaleX(1.0000);transform-origin:0 0;">Правила позволяют получать уведомления и запрещать определенные действия в</div>
<div class="t" style="left:509.40px;top:465.54px;font-size:25px;color:#000;font-weight:400;transform:scaleX(1.0029);transform-origin:0 0;">системе на основе гибко настраиваемых условий.</div>
<div class="t" style="left:508.39px;top:520.64px;font-size:25px;color:#000;font-weight:400;transform:scaleX(1.0055);transform-origin:0 0;">Подробности функционала и примеры использования можно посмотреть в <span style="color:#9b5cf6">документации.</span></div>
<div class="t" style="left:499.99px;top:649.28px;font-size:24px;color:#000;font-weight:400;transform:scaleX(1.0061);transform-origin:0 0;-webkit-text-stroke:0.7px #000;">ID</div>
<div class="t" style="left:568.54px;top:649.28px;font-size:24px;color:#000;font-weight:400;transform:scaleX(1.0582);transform-origin:0 0;-webkit-text-stroke:0.7px #000;">Название правила</div>
<div class="t" style="left:1160.09px;top:649.28px;font-size:24px;color:#000;font-weight:400;transform:scaleX(1.1060);transform-origin:0 0;-webkit-text-stroke:0.7px #000;">Статус</div>
<div class="t" style="left:1285.92px;top:649.28px;font-size:24px;color:#000;font-weight:400;transform:scaleX(1.0778);transform-origin:0 0;-webkit-text-stroke:0.7px #000;">Событие</div>
<div class="t" style="left:1789.20px;top:649.28px;font-size:24px;color:#000;font-weight:400;transform:scaleX(1.0917);transform-origin:0 0;-webkit-text-stroke:0.7px #000;">Действие</div>
<div class="a" style="left:480px;top:695px;width:1776px;height:1px;background:#d6d6d6"></div>
<div class="t" style="left:501.33px;top:728.04px;font-size:25px;color:#000;font-weight:400;transform:scaleX(0.8725);transform-origin:0 0;">19</div>
<div class="t" style="left:569.60px;top:728.04px;font-size:25px;color:#000;font-weight:400;transform:scaleX(0.9887);transform-origin:0 0;">Уведомления о любых удалениях</div>
<div class="a" style="left:1196px;top:735.00px;width:14px;height:14px;border-radius:50%;background:#6ec39a"></div>
<div class="t" style="left:1285.50px;top:728.04px;font-size:25px;color:#000;font-weight:400;transform:scaleX(0.9985);transform-origin:0 0;">Перемещение элемента в корзину</div>
<div class="t" style="left:1787.49px;top:728.04px;font-size:25px;color:#000;font-weight:400;transform:scaleX(1.0070);transform-origin:0 0;">Отправить уведомление</div>
<svg style="left:2130px;top:723.20px" width="32" height="31" viewBox="0 0 32 31"><path d="M2.5 28.8 L4 21 L21.8 3.2 Q23.2 1.8 24.6 3.2 L28.2 6.8 Q29.6 8.2 28.2 9.6 L10.4 27.4 Z M4 21 Q8.8 22.5 10.4 27.4 M27.1 12.6 L30.2 15.6 L24.3 21.3" fill="none" stroke="#222" stroke-width="2.1" stroke-linecap="round" stroke-linejoin="round"/></svg>
<svg style="left:2200px;top:723.20px" width="26" height="31" viewBox="0 0 26 31"><path d="M1.5 7.5 H23.5 M3.3 7.5 V25.2 Q3.3 29.3 7.3 29.3 H17.7 Q21.7 29.3 21.7 25.2 V7.5 M7 7.2 Q7 1.6 12.5 1.6 Q18 1.6 18 7.2" fill="none" stroke="#222" stroke-width="2.1" stroke-linecap="round" stroke-linejoin="round"/></svg>
<div class="a" style="left:480px;top:784px;width:1776px;height:1px;background:#d6d6d6"></div>
<div class="t" style="left:501.36px;top:816.64px;font-size:25px;color:#000;font-weight:400;transform:scaleX(0.8377);transform-origin:0 0;">18</div>
<div class="t" style="left:569.60px;top:816.64px;font-size:25px;color:#000;font-weight:400;transform:scaleX(0.9899);transform-origin:0 0;">Дантесу тут не рады...</div>
<div class="a" style="left:1196px;top:823.60px;width:14px;height:14px;border-radius:50%;background:#6ec39a"></div>
<div class="t" style="left:1287.50px;top:816.64px;font-size:25px;color:#000;font-weight:400;transform:scaleX(1.0187);transform-origin:0 0;">Авторизация пользователя</div>
<div class="t" style="left:1788.50px;top:816.64px;font-size:25px;color:#000;font-weight:400;transform:scaleX(1.0116);transform-origin:0 0;">Запретить действие</div>
<svg style="left:2130px;top:811.80px" width="32" height="31" viewBox="0 0 32 31"><path d="M2.5 28.8 L4 21 L21.8 3.2 Q23.2 1.8 24.6 3.2 L28.2 6.8 Q29.6 8.2 28.2 9.6 L10.4 27.4 Z M4 21 Q8.8 22.5 10.4 27.4 M27.1 12.6 L30.2 15.6 L24.3 21.3" fill="none" stroke="#222" stroke-width="2.1" stroke-linecap="round" stroke-linejoin="round"/></svg>
<svg style="left:2200px;top:811.80px" width="26" height="31" viewBox="0 0 26 31"><path d="M1.5 7.5 H23.5 M3.3 7.5 V25.2 Q3.3 29.3 7.3 29.3 H17.7 Q21.7 29.3 21.7 25.2 V7.5 M7 7.2 Q7 1.6 12.5 1.6 Q18 1.6 18 7.2" fill="none" stroke="#222" stroke-width="2.1" stroke-linecap="round" stroke-linejoin="round"/></svg>
<div class="a" style="left:480px;top:872px;width:1776px;height:1px;background:#d6d6d6"></div>
<div class="t" style="left:501.39px;top:905.24px;font-size:25px;color:#000;font-weight:400;transform:scaleX(0.8066);transform-origin:0 0;">14</div>
<div class="t" style="left:567.59px;top:905.24px;font-size:25px;color:#000;font-weight:400;transform:scaleX(1.0054);transform-origin:0 0;">Нельзя удалять банковские секреты в корзину</div>
<div class="a" style="left:1196px;top:912.20px;width:14px;height:14px;border-radius:50%;background:#6ec39a"></div>
<div class="t" style="left:1285.50px;top:905.24px;font-size:25px;color:#000;font-weight:400;transform:scaleX(0.9985);transform-origin:0 0;">Перемещение элемента в корзину</div>
<div class="t" style="left:1788.50px;top:905.24px;font-size:25px;color:#000;font-weight:400;transform:scaleX(1.0116);transform-origin:0 0;">Запретить действие</div>
<svg style="left:2130px;top:900.40px" width="32" height="31" viewBox="0 0 32 31"><path d="M2.5 28.8 L4 21 L21.8 3.2 Q23.2 1.8 24.6 3.2 L28.2 6.8 Q29.6 8.2 28.2 9.6 L10.4 27.4 Z M4 21 Q8.8 22.5 10.4 27.4 M27.1 12.6 L30.2 15.6 L24.3 21.3" fill="none" stroke="#222" stroke-width="2.1" stroke-linecap="round" stroke-linejoin="round"/></svg>
<svg style="left:2200px;top:900.40px" width="26" height="31" viewBox="0 0 26 31"><path d="M1.5 7.5 H23.5 M3.3 7.5 V25.2 Q3.3 29.3 7.3 29.3 H17.7 Q21.7 29.3 21.7 25.2 V7.5 M7 7.2 Q7 1.6 12.5 1.6 Q18 1.6 18 7.2" fill="none" stroke="#222" stroke-width="2.1" stroke-linecap="round" stroke-linejoin="round"/></svg>
<div class="a" style="left:480px;top:961px;width:1776px;height:1px;background:#d6d6d6"></div>
<div class="t" style="left:501.40px;top:993.84px;font-size:25px;color:#8c8c8c;font-weight:400;transform:scaleX(0.8030);transform-origin:0 0;">13</div>
<div class="t" style="left:567.63px;top:993.84px;font-size:25px;color:#8c8c8c;font-weight:400;transform:scaleX(0.9852);transform-origin:0 0;">Просмотр пароля от 1С</div>
<div class="a" style="left:1196px;top:1000.80px;width:14px;height:14px;border-radius:50%;background:#c2c2c2"></div>
<div class="t" style="left:1285.46px;top:993.84px;font-size:25px;color:#8c8c8c;font-weight:400;transform:scaleX(1.0219);transform-origin:0 0;">Просмотр пароля</div>
<div class="t" style="left:1788.50px;top:993.84px;font-size:25px;color:#8c8c8c;font-weight:400;transform:scaleX(1.0116);transform-origin:0 0;">Запретить действие</div>
<svg style="left:2130px;top:989.00px" width="32" height="31" viewBox="0 0 32 31"><path d="M2.5 28.8 L4 21 L21.8 3.2 Q23.2 1.8 24.6 3.2 L28.2 6.8 Q29.6 8.2 28.2 9.6 L10.4 27.4 Z M4 21 Q8.8 22.5 10.4 27.4 M27.1 12.6 L30.2 15.6 L24.3 21.3" fill="none" stroke="#222" stroke-width="2.1" stroke-linecap="round" stroke-linejoin="round"/></svg>
<svg style="left:2200px;top:989.00px" width="26" height="31" viewBox="0 0 26 31"><path d="M1.5 7.5 H23.5 M3.3 7.5 V25.2 Q3.3 29.3 7.3 29.3 H17.7 Q21.7 29.3 21.7 25.2 V7.5 M7 7.2 Q7 1.6 12.5 1.6 Q18 1.6 18 7.2" fill="none" stroke="#222" stroke-width="2.1" stroke-linecap="round" stroke-linejoin="round"/></svg>
<div class="a" style="left:480px;top:1049px;width:1776px;height:1px;background:#d6d6d6"></div>
<div class="t" style="left:501.38px;top:1082.44px;font-size:25px;color:#8c8c8c;font-weight:400;transform:scaleX(0.8223);transform-origin:0 0;">12</div>
<div class="t" style="left:569.60px;top:1082.44px;font-size:25px;color:#8c8c8c;font-weight:400;transform:scaleX(0.9977);transform-origin:0 0;">Запрет создания элементов в «Библиотеке»</div>
<div class="a" style="left:1196px;top:1089.40px;width:14px;height:14px;border-radius:50%;background:#c2c2c2"></div>
<div class="t" style="left:1286.49px;top:1082.44px;font-size:25px;color:#8c8c8c;font-weight:400;transform:scaleX(1.0076);transform-origin:0 0;">Создание элемента</div>
<div class="t" style="left:1788.50px;top:1082.44px;font-size:25px;color:#8c8c8c;font-weight:400;transform:scaleX(1.0116);transform-origin:0 0;">Запретить действие</div>
<svg style="left:2130px;top:1077.60px" width="32" height="31" viewBox="0 0 32 31"><path d="M2.5 28.8 L4 21 L21.8 3.2 Q23.2 1.8 24.6 3.2 L28.2 6.8 Q29.6 8.2 28.2 9.6 L10.4 27.4 Z M4 21 Q8.8 22.5 10.4 27.4 M27.1 12.6 L30.2 15.6 L24.3 21.3" fill="none" stroke="#222" stroke-width="2.1" stroke-linecap="round" stroke-linejoin="round"/></svg>
<svg style="left:2200px;top:1077.60px" width="26" height="31" viewBox="0 0 26 31"><path d="M1.5 7.5 H23.5 M3.3 7.5 V25.2 Q3.3 29.3 7.3 29.3 H17.7 Q21.7 29.3 21.7 25.2 V7.5 M7 7.2 Q7 1.6 12.5 1.6 Q18 1.6 18 7.2" fill="none" stroke="#222" stroke-width="2.1" stroke-linecap="round" stroke-linejoin="round"/></svg>
<div class="a" style="left:480px;top:1138px;width:1776px;height:1px;background:#d6d6d6"></div>
<div class="t" style="left:501.20px;top:1171.04px;font-size:25px;color:#8c8c8c;font-weight:400;transform:scaleX(1.0000);transform-origin:0 0;">8</div>
<div class="t" style="left:567.56px;top:1171.04px;font-size:25px;color:#8c8c8c;font-weight:400;transform:scaleX(1.0187);transform-origin:0 0;">Контроль доступов к банковским секретам</div>
<div class="a" style="left:1196px;top:1178.00px;width:14px;height:14px;border-radius:50%;background:#c2c2c2"></div>
<div class="t" style="left:1286.50px;top:1171.04px;font-size:25px;color:#8c8c8c;font-weight:400;transform:scaleX(0.9967);transform-origin:0 0;">Обновление права доступа к элементу</div>
<div class="t" style="left:1787.49px;top:1171.04px;font-size:25px;color:#8c8c8c;font-weight:400;transform:scaleX(1.0070);transform-origin:0 0;">Отправить уведомление</div>
<svg style="left:2130px;top:1166.20px" width="32" height="31" viewBox="0 0 32 31"><path d="M2.5 28.8 L4 21 L21.8 3.2 Q23.2 1.8 24.6 3.2 L28.2 6.8 Q29.6 8.2 28.2 9.6 L10.4 27.4 Z M4 21 Q8.8 22.5 10.4 27.4 M27.1 12.6 L30.2 15.6 L24.3 21.3" fill="none" stroke="#222" stroke-width="2.1" stroke-linecap="round" stroke-linejoin="round"/></svg>
<svg style="left:2200px;top:1166.20px" width="26" height="31" viewBox="0 0 26 31"><path d="M1.5 7.5 H23.5 M3.3 7.5 V25.2 Q3.3 29.3 7.3 29.3 H17.7 Q21.7 29.3 21.7 25.2 V7.5 M7 7.2 Q7 1.6 12.5 1.6 Q18 1.6 18 7.2" fill="none" stroke="#222" stroke-width="2.1" stroke-linecap="round" stroke-linejoin="round"/></svg>
<div class="a" style="left:480px;top:1226px;width:1776px;height:1px;background:#d6d6d6"></div>
<svg style="left:0;top:0" width="2316" height="1549"><path d="M502.9 1265.90 L507 1263.40 V1280.80" fill="none" stroke="#000" stroke-width="2.1" stroke-linejoin="round"/></svg>
<div class="t" style="left:569.60px;top:1259.64px;font-size:25px;color:#000;font-weight:400;transform:scaleX(1.0054);transform-origin:0 0;">Запрет ненормативной лексики в названиях</div>
<div class="a" style="left:1196px;top:1266.60px;width:14px;height:14px;border-radius:50%;background:#6ec39a"></div>
<div class="t" style="left:1286.49px;top:1259.64px;font-size:25px;color:#000;font-weight:400;transform:scaleX(1.0076);transform-origin:0 0;">Создание элемента</div>
<div class="t" style="left:1788.50px;top:1259.64px;font-size:25px;color:#000;font-weight:400;transform:scaleX(1.0116);transform-origin:0 0;">Запретить действие</div>
<svg style="left:2130px;top:1254.80px" width="32" height="31" viewBox="0 0 32 31"><path d="M2.5 28.8 L4 21 L21.8 3.2 Q23.2 1.8 24.6 3.2 L28.2 6.8 Q29.6 8.2 28.2 9.6 L10.4 27.4 Z M4 21 Q8.8 22.5 10.4 27.4 M27.1 12.6 L30.2 15.6 L24.3 21.3" fill="none" stroke="#222" stroke-width="2.1" stroke-linecap="round" stroke-linejoin="round"/></svg>
<svg style="left:2200px;top:1254.80px" width="26" height="31" viewBox="0 0 26 31"><path d="M1.5 7.5 H23.5 M3.3 7.5 V25.2 Q3.3 29.3 7.3 29.3 H17.7 Q21.7 29.3 21.7 25.2 V7.5 M7 7.2 Q7 1.6 12.5 1.6 Q18 1.6 18 7.2" fill="none" stroke="#222" stroke-width="2.1" stroke-linecap="round" stroke-linejoin="round"/></svg>
<div class="a" style="left:480px;top:1315px;width:1776px;height:1px;background:#d6d6d6"></div>
</div></div></body></html>
